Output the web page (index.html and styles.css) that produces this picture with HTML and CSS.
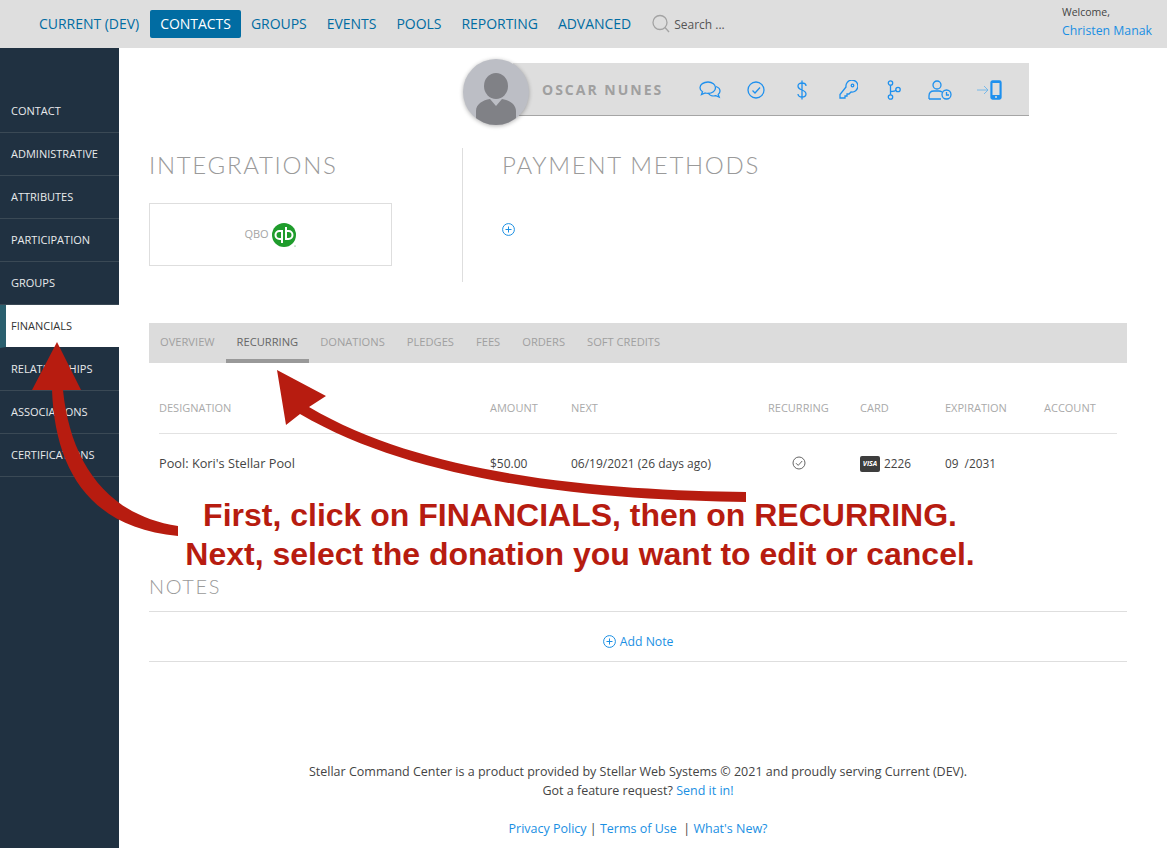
FILE: index.html
```html
<!DOCTYPE html>
<html lang="en">
<head>
  <meta charset="UTF-8">
  <title>Stellar Command Center</title>
  <link rel="stylesheet" href="styles.css">
</head>
<body>

  <!-- Top bar -->
  <header class="top-bar">
    <nav class="top-nav">
      <a href="#">CURRENT (DEV)</a>
      <a href="#" class="active">CONTACTS</a>
      <a href="#">GROUPS</a>
      <a href="#">EVENTS</a>
      <a href="#">POOLS</a>
      <a href="#">REPORTING</a>
      <a href="#">ADVANCED</a>
    </nav>
    <div class="search">
      <svg width="20" height="20" viewBox="0 0 20 20" fill="none" stroke="#a3a3a3" stroke-width="1.3">
        <circle cx="9" cy="8.500" r="7"/>
        <path d="M14 13.500l4 4.500"/>
      </svg>
      <span>Search ...</span>
    </div>
    <div class="welcome">
      <span>Welcome,</span>
      <a href="#">Christen Manak</a>
    </div>
  </header>

  <div class="main-layout">
    <!-- Sidebar -->
    <aside class="side-nav">
      <a href="#">CONTACT</a>
      <a href="#">ADMINISTRATIVE</a>
      <a href="#">ATTRIBUTES</a>
      <a href="#">PARTICIPATION</a>
      <a href="#">GROUPS</a>
      <a href="#" class="active">FINANCIALS</a>
      <a href="#">RELATIONSHIPS</a>
      <a href="#">ASSOCIATIONS</a>
      <a href="#">CERTIFICATIONS</a>
    </aside>

    <main class="content">
      <!-- Contact header -->
      <div class="profile">
        <div class="avatar">
          <svg width="66" height="66" viewBox="0 0 66 66">
            <ellipse cx="33" cy="27" rx="12" ry="13" fill="#808186"/>
            <path d="M13 66V52c0-7 7-11 14-12l6 7 6-7c7 1 14 5 14 12v14z" fill="#808186"/>
          </svg>
        </div>
        <div class="profile-bar">
          <span class="profile-name">OSCAR NUNES</span>
          <div class="profile-icons">
            <svg width="22" height="20" viewBox="0 0 22 20">
              <path d="M9 2c-4.400 0-8 2.500-8 5.700 0 1.700 1 3.100 2.500 4.100L2.500 14.500l3.700-1.500c1 .3 1.800.4 2.800.4 4.400 0 7.500-2.500 7.500-5.700S13.400 2 9 2z"/>
              <path d="M17 6.500c2.300.8 4 2.500 4 4.500 0 1.400-.7 2.500-1.800 3.400l1 2.600-3.400-1.300c-2.800.7-6.300-.2-7.600-2.700"/>
            </svg>
            <svg width="18" height="18" viewBox="0 0 18 18">
              <circle cx="9" cy="9" r="8"/>
              <path d="M5.500 9.500l2.500 2.500 5-5.500"/>
            </svg>
            <svg width="10" height="20" viewBox="0 0 10 20">
              <path d="M9 6c0-2-1.800-3-4-3S1 4 1 6c0 5 8 3 8 8 0 2-1.800 3-4 3s-4-1-4-3M5 0.500v19"/>
            </svg>
            <svg width="20" height="20" viewBox="0 0 20 20">
              <path d="M8 7a6 6 0 1 1 5 5l-2 2h-2v2H7v2H2v-3.500z"/>
              <circle cx="14.500" cy="5.500" r="1.300"/>
            </svg>
            <svg width="14" height="20" viewBox="0 0 14 20">
              <circle cx="3.500" cy="3" r="2.200"/>
              <circle cx="3.500" cy="17" r="2.200"/>
              <circle cx="11" cy="9.500" r="2.200"/>
              <path d="M3.500 5.200v9.600M3.500 11.500c3 0 5-.5 5.500-1.500"/>
            </svg>
            <svg width="24" height="20" viewBox="0 0 24 20">
              <circle cx="9" cy="5" r="4"/>
              <path d="M1 19v-3c0-3 2-5 5-5h5c1 0 2 .3 3 1M1 19h12"/>
              <circle cx="18.500" cy="14.500" r="4.500"/>
              <path d="M18.500 12v3h2.500"/>
            </svg>
            <svg class="icon-device" width="26" height="20" viewBox="0 0 26 20">
              <path class="thin" d="M1 10h11M8 6l4 4-4 4"/>
              <rect class="solid" x="15" y="1" width="10" height="18" rx="1.500"/>
              <rect class="screen" x="16.500" y="3" width="7" height="12"/>
              <circle class="screen" cx="20" cy="17" r="1"/>
            </svg>
          </div>
        </div>
      </div>

      <!-- Integrations + payment methods -->
      <div class="split">
        <section class="split-left">
          <h2 class="light-title">INTEGRATIONS</h2>
          <div class="integration-box">
            <span>QBO</span>
            <svg width="26" height="26" viewBox="0 0 26 26">
              <circle cx="13" cy="13" r="12" fill="#1f9c2c"/>
              <circle cx="24" cy="24" r="0.500" fill="#1f9c2c"/>
              <path d="M11 9H8.500a4 4 0 0 0 0 8H11M11 8v13M15 17h2.500a4 4 0 0 0 0-8H15M15 5v13" fill="none" stroke="#fff" stroke-width="2"/>
            </svg>
          </div>
        </section>
        <section class="split-right">
          <h2 class="light-title">PAYMENT METHODS</h2>
          <a href="#" class="add-payment">
            <svg class="plus-icon" width="13" height="13" viewBox="0 0 13 13">
              <circle cx="6.500" cy="6.500" r="5.900"/>
              <path d="M6.500 3.500v6M3.500 6.500h6"/>
            </svg>
          </a>
        </section>
      </div>

      <!-- Financial tabs -->
      <div class="tabs">
        <a href="#">OVERVIEW</a>
        <a href="#" class="active">RECURRING</a>
        <a href="#">DONATIONS</a>
        <a href="#">PLEDGES</a>
        <a href="#">FEES</a>
        <a href="#">ORDERS</a>
        <a href="#">SOFT CREDITS</a>
      </div>

      <div class="fin-table">
        <div class="fin-row fin-head">
          <span>DESIGNATION</span>
          <span>AMOUNT</span>
          <span>NEXT</span>
          <span>RECURRING</span>
          <span>CARD</span>
          <span>EXPIRATION</span>
          <span>ACCOUNT</span>
        </div>
        <div class="fin-row fin-body">
          <span class="designation">Pool: Kori's Stellar Pool</span>
          <span>$50.00</span>
          <span>06/19/2021 (26 days ago)</span>
          <span class="check-cell">
            <svg width="14" height="14" viewBox="0 0 14 14" fill="none" stroke="#555" stroke-width="0.900">
              <circle cx="7" cy="7" r="6"/>
              <path d="M4 7.200l2.200 2.200 4-4.400"/>
            </svg>
          </span>
          <span class="card-cell"><i class="visa">VISA</i> 2226</span>
          <span class="expiry">09 &nbsp;/2031</span>
          <span></span>
        </div>
      </div>

      <!-- Notes -->
      <section class="notes">
        <h2 class="light-title small">NOTES</h2>
        <div class="add-note">
          <a href="#">
            <svg class="plus-icon" width="13" height="13" viewBox="0 0 13 13">
              <circle cx="6.500" cy="6.500" r="5.900"/>
              <path d="M6.500 3.500v6M3.500 6.500h6"/>
            </svg>
            Add Note
          </a>
        </div>
      </section>

      <footer class="page-footer">
        <p>Stellar Command Center is a product provided by Stellar Web Systems © 2021 and proudly serving Current (DEV).</p>
        <p>Got a feature request? <a href="#">Send it in!</a></p>
        <p class="footer-links"><a href="#">Privacy Policy</a> | <a href="#">Terms of Use</a> &nbsp;| <a href="#">What's New?</a></p>
      </footer>
    </main>
  </div>

  <!-- Annotation drawn over the page -->
  <svg class="arrows" width="1167" height="848" viewBox="0 0 1167 848">
    <path d="M178 526C105 515 70 460 63 390H81L57 342 32 390H52C55 470 90 528 178 536z"/>
    <path d="M746 492C620 490 432 480 309 407L326 396 277 370 286 425 300 414C428 489 620 500 746 502z"/>
  </svg>
  <div class="callout">
    First, click on FINANCIALS, then on RECURRING.<br>
    Next, select the donation you want to edit or cancel.
  </div>

</body>
</html>
```

FILE: styles.css
```css
body {
  margin: 0;
  background-color: #fff;
  color: #444;
  font-family: "Open Sans", "Noto Sans", sans-serif;
  font-size: 12px;
  overflow: hidden;
}

a {
  color: #1a8fe3;
  text-decoration: none;
}

/* Top bar */
.top-bar {
  display: flex;
  align-items: center;
  height: 48px;
  padding-left: 29px;
  background-color: #dedede;
}

.top-nav {
  display: flex;
  align-items: center;
}

.top-nav a {
  padding: 0 10px;
  height: 28px;
  line-height: 28px;
  color: #016ca2;
  font-size: 14px;
  letter-spacing: -0.03px;
  border-radius: 2px;
}

.top-nav a:first-child {
  padding-right: 11px;
}

.top-nav a.active {
  background-color: #016ca2;
  color: #fff;
}

.search {
  display: flex;
  align-items: center;
  gap: 3px;
  margin-left: 10px;
  color: #555;
}

.welcome {
  display: flex;
  flex-direction: column;
  gap: 3px;
  margin-left: auto;
  margin-bottom: 4px;
  width: 105px;
}

.welcome span {
  font-size: 10.5px;
}

.welcome a {
  font-size: 12.3px;
}

/* Layout */
.main-layout {
  display: flex;
  height: 800px;
}

.side-nav {
  flex: 0 0 119px;
  padding-top: 42px;
  background-color: #203141;
}

.side-nav a {
  display: block;
  height: 42px;
  line-height: 41px;
  padding-left: 11px;
  color: #e8eaec;
  font-size: 11px;
  border-bottom: 1px solid #3a4955;
}

.side-nav a.active {
  padding-left: 5px;
  background-color: #fff;
  color: #333;
  border-left: 6px solid #2a5f6e;
  border-bottom-color: #203141;
}

.content {
  flex: 1;
  padding: 15px 40px 0 30px;
}

/* Contact header */
.profile {
  display: flex;
  height: 53px;
  margin-left: 314px;
  margin-right: 98px;
}

.avatar {
  flex: 0 0 66px;
  height: 66px;
  margin-top: -4px;
  margin-right: -16px;
  position: relative;
  z-index: 1;
  overflow: hidden;
  border-radius: 50%;
  background-color: #bcbec5;
  box-shadow: 0 1px 4px rgba(0, 0, 0, 0.3);
}

.profile-bar {
  flex: 1;
  display: flex;
  align-items: center;
  padding-left: 29px;
  background-color: #dedede;
  border-bottom: 1px solid #a5a5a5;
}

.profile-name {
  width: 145px;
  color: #a0a0a0;
  font-size: 14px;
  font-weight: 700;
  letter-spacing: 2px;
}

.profile-icons {
  display: grid;
  grid-auto-flow: column;
  grid-auto-columns: 46px;
  align-items: center;
  justify-items: center;
  padding-top: 2px;
}

.profile-icons svg {
  fill: none;
  stroke: #1e90ee;
  stroke-width: 1.3;
}

.icon-device {
  margin-left: 6px;
}

.icon-device .thin {
  stroke: #6cb4ea;
  stroke-width: 0.9;
}

.icon-device .solid {
  fill: #1e90ee;
}

.icon-device .screen {
  fill: #dedede;
  stroke: none;
}

/* Integrations + payment */
.light-title {
  margin: 0;
  color: #9a9a9a;
  font-family: Lato, sans-serif;
  font-size: 24px;
  font-weight: 300;
  letter-spacing: 1.7px;
  line-height: 34px;
}

.light-title.small {
  font-size: 20px;
  letter-spacing: 1.6px;
  line-height: 28px;
}

.split {
  display: flex;
  height: 134px;
  margin-top: 32px;
}

.split-left {
  flex: 0 0 313px;
  border-right: 1px solid #dedede;
}

.split-right {
  flex: 1;
  padding-left: 39px;
}

.integration-box {
  display: flex;
  align-items: center;
  justify-content: center;
  gap: 2px;
  width: 241px;
  height: 61px;
  margin-top: 21px;
  border: 1px solid #dedede;
  color: #a5a5a5;
  font-size: 11px;
}

.integration-box span {
  margin-bottom: 2px;
}

.add-payment {
  display: block;
  margin-top: 39px;
}

.plus-icon {
  fill: none;
  stroke: #1a8fe3;
  stroke-width: 1;
  vertical-align: -2px;
}

/* Tabs */
.tabs {
  display: flex;
  height: 40px;
  margin-top: 41px;
  background-color: #dcdcdc;
}

.tabs a {
  padding: 0 11px;
  line-height: 37px;
  color: #a0a0a0;
  font-size: 11.15px;
}

.tabs a.active {
  color: #666;
  border-bottom: 4px solid #999;
}

/* Financial table */
.fin-table {
  padding: 0 10px;
}

.fin-row {
  display: grid;
  grid-template-columns: 331px 81px 197px 92px 85px 99px 73px;
  align-items: center;
}

.fin-head {
  box-sizing: border-box;
  height: 71px;
  padding-top: 18px;
  border-bottom: 1px solid #e2e2e2;
  color: #aaa;
  font-size: 11px;
}

.fin-body {
  height: 58px;
}

.designation {
  font-size: 12.75px;
}

.card-cell,
.expiry {
  font-size: 11.8px;
}

.check-cell {
  padding-left: 24px;
}

.check-cell svg {
  display: block;
}

.visa {
  display: inline-block;
  width: 20px;
  height: 16px;
  margin-right: 1px;
  border-radius: 2px;
  background-color: #3d3d3d;
  color: #fff;
  font-size: 7px;
  font-weight: 700;
  line-height: 16px;
  text-align: center;
  vertical-align: 2px;
}

/* Notes */
.notes {
  margin-top: 80px;
}

.add-note {
  box-sizing: border-box;
  height: 51px;
  margin-top: 11px;
  padding-top: 10px;
  font-size: 12.25px;
  line-height: 39px;
  text-align: center;
  border-top: 1px solid #dedede;
  border-bottom: 1px solid #dedede;
}

.add-note .plus-icon {
  margin-right: 1px;
}

/* Footer */
.page-footer {
  margin-top: 100px;
  font-size: 12.5px;
  text-align: center;
}

.page-footer p {
  margin: 0;
  line-height: 19px;
}

.page-footer .footer-links {
  margin-top: 19px;
}

/* Annotation */
.arrows {
  position: absolute;
  top: 0;
  left: 0;
  fill: #b71c10;
  pointer-events: none;
}

.callout {
  position: absolute;
  top: 496px;
  left: 130px;
  width: 900px;
  color: #b71c10;
  font-family: "Liberation Sans", Arial, sans-serif;
  font-size: 32px;
  font-weight: 700;
  line-height: 39px;
  text-align: center;
}
```
